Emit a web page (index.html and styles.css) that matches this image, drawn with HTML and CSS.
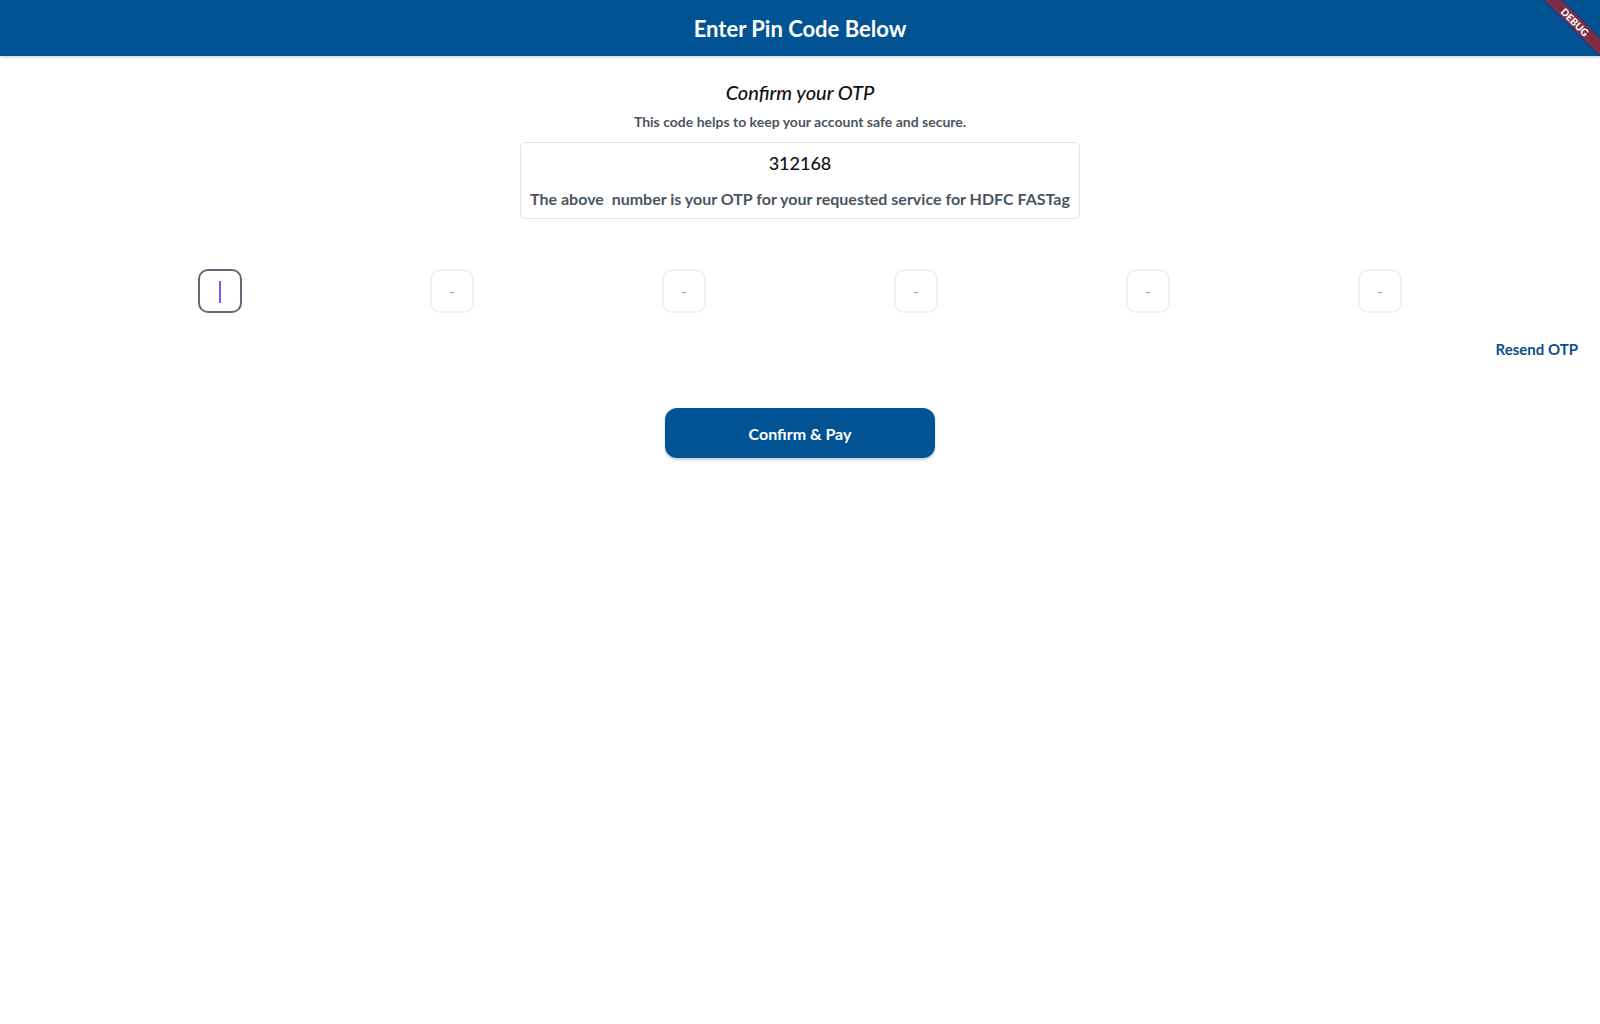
FILE: index.html
```html
<!DOCTYPE html>
<html>
<head>
<meta charset="utf-8">
<link rel="stylesheet" href="styles.css">
</head>
<body>
<header class="appbar">
  <h1 class="appbar-title">Enter Pin Code Below</h1>
  <div class="debug"><div class="debug-ribbon">DEBUG</div></div>
</header>
<main class="content">
  <h2 class="heading">Confirm your OTP</h2>
  <p class="sub">This code helps to keep your account safe and secure.</p>
  <div class="otp-card">
    <div class="otp-code">312168</div>
    <div class="otp-note">The above&nbsp; number is your OTP for your requested service for HDFC FASTag</div>
  </div>
  <div class="pin-row">
    <div class="pin pin-active"><span class="caret"></span></div>
    <div class="pin">-</div>
    <div class="pin">-</div>
    <div class="pin">-</div>
    <div class="pin">-</div>
    <div class="pin">-</div>
  </div>
  <div class="resend-row"><a class="resend">Resend OTP</a></div>
  <button class="confirm">Confirm &amp; Pay</button>
</main>
</body>
</html>
```

FILE: styles.css
```css
* { box-sizing: border-box; }
html, body { margin: 0; padding: 0; background: #fff; }
body { font-family: Lato, "Open Sans", sans-serif; width: 1600px; height: 1024px; overflow: hidden; }

.appbar {
  position: relative;
  height: 56px;
  background: #025394;
  display: flex;
  align-items: center;
  justify-content: center;
  box-shadow: 0 1px 3px rgba(0,0,0,0.22);
}
.appbar-title {
  margin: 0;
  color: #fff;
  font-size: 22px;
  font-weight: 700;
}
.debug {
  position: absolute;
  top: 0; right: 0;
  width: 80px; height: 80px;
  overflow: hidden;
}
.debug-ribbon {
  position: absolute;
  left: -5px; top: 16px;
  width: 120px; height: 12px;
  background: #7e2b46;
  color: #fff;
  font-size: 10px;
  font-weight: 900;
  line-height: 12px;
  text-align: center;
  transform: rotate(45deg);
  box-shadow: 0 0 4px rgba(0,0,0,0.25);
}

.content {
  display: flex;
  flex-direction: column;
  align-items: center;
  padding-top: 23px;
}
.heading {
  margin: 0;
  font-size: 20px;
  font-style: italic;
  font-weight: 500;
  color: #111;
  line-height: 26px;
}
.sub {
  margin: 8px 0 0;
  font-size: 14px;
  font-weight: 700;
  color: #4b5561;
  line-height: 17px;
}
.otp-card {
  margin-top: 12px;
  border: 1px solid #e3e5e8;
  border-radius: 5px;
  padding: 9px 9px 9px;
  display: flex;
  flex-direction: column;
  align-items: center;
}
.otp-code {
  font-size: 18px;
  font-weight: 500;
  color: #111;
  line-height: 22px;
}
.otp-note {
  margin-top: 15px;
  font-size: 16px;
  font-weight: 700;
  color: #4b5561;
  line-height: 20px;
}
.pin-row {
  align-self: stretch;
  margin-top: 50px;
  padding: 0 10px;
  display: flex;
  justify-content: space-evenly;
}
.pin {
  width: 44px;
  height: 44px;
  border: 2px solid #eef1f6;
  border-radius: 10px;
  display: flex;
  align-items: center;
  justify-content: center;
  font-size: 14px;
  color: #999;
}
.pin-active {
  border-color: #5f6b78;
}
.caret {
  width: 2px;
  height: 22px;
  background: #6f5cf5;
  margin-top: 2px;
}
.resend-row {
  align-self: stretch;
  display: flex;
  justify-content: flex-end;
  padding-right: 22px;
  margin-top: 26px;
}
.resend {
  font-size: 15px;
  font-weight: 700;
  color: #0b4f8f;
  line-height: 20px;
  cursor: pointer;
}
.confirm {
  margin-top: 49px;
  width: 270px;
  height: 50px;
  border: none;
  border-radius: 12px;
  background: #025394;
  color: #fff;
  font-family: Lato, sans-serif;
  font-size: 16px;
  font-weight: 700;
  box-shadow: 0 2px 3px rgba(0,0,0,0.2);
}
```
